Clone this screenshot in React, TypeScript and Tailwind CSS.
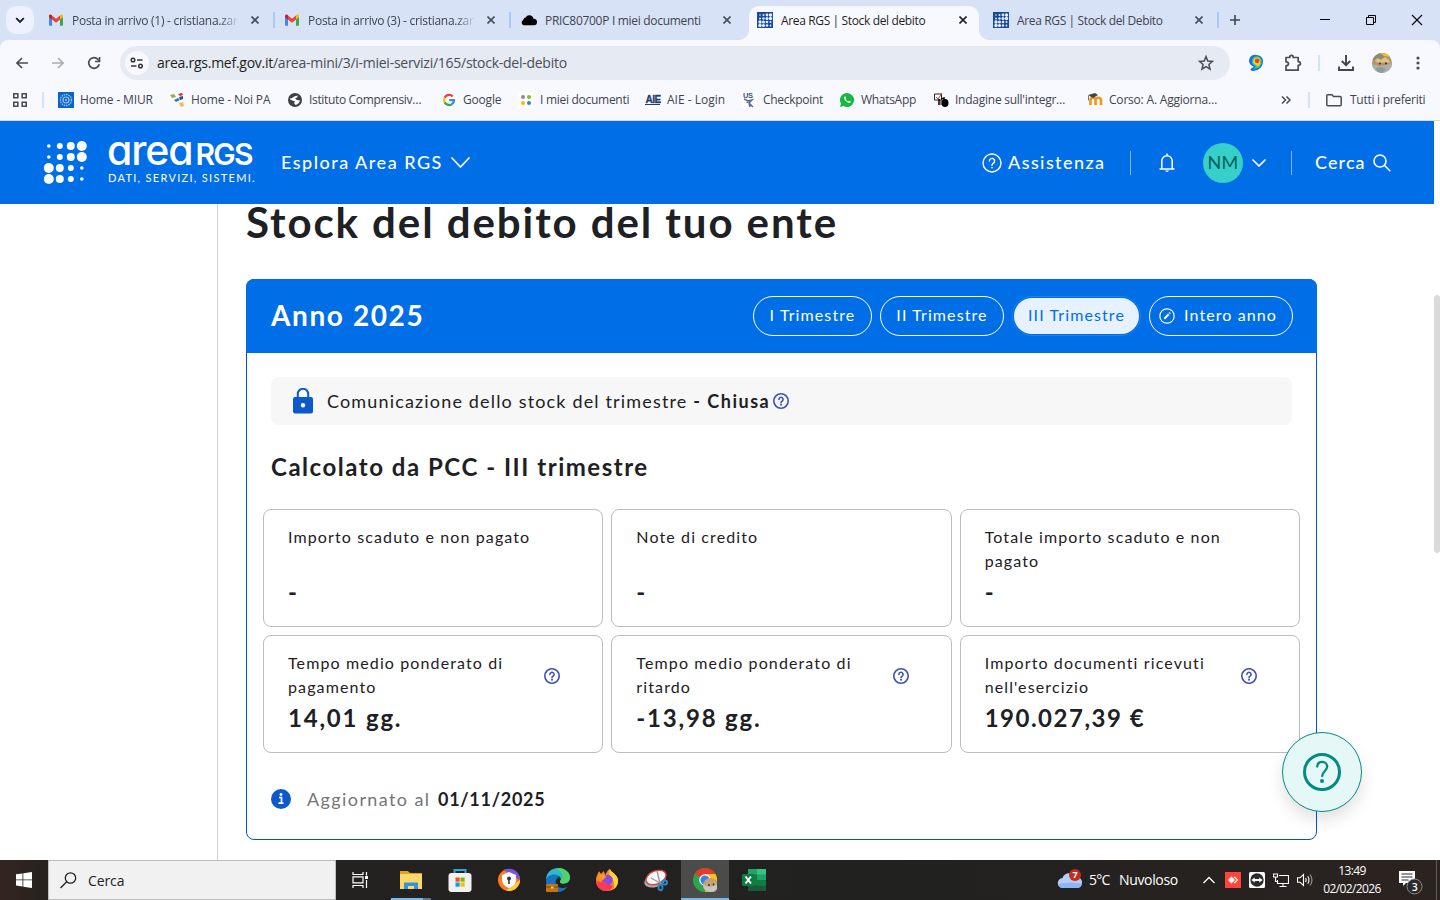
import type { ReactNode } from "react";
import { clsx } from "clsx";

const UI = "font-['Open_Sans','Noto_Sans',sans-serif]";
const PAGE = "font-['Lato','Open_Sans',sans-serif]";

/* ---------- small icons ---------- */

function Gmail() {
  return (
    <svg width="16" height="16" viewBox="1 0 16 16">
      <path d="M2 4v9a.8.8 0 0 0 .8.8H5V7z" fill="#4285f4" />
      <path d="M16 4v9a.8.8 0 0 1-.8.8H13V7z" fill="#34a853" />
      <path d="M5 3.600 9 6.800l4-3.200v4L9 10.800 5 7.600z" fill="#ea4335" />
      <path d="M2 4c0-1.600 1.700-2 3-.8v4.400L2 5.200z" fill="#c5221f" />
      <path d="M16 4c0-1.600-1.700-2-3-.8v4.400l3-2.400z" fill="#fbbc04" />
    </svg>
  );
}

function Cloud() {
  return (
    <svg width="16" height="16" viewBox="0 0 16 16">
      <path d="M2.500 13.200a2.800 2.800 0 0 1-.2-5.200A3 3 0 0 1 4.600 5.500a4.200 4.200 0 0 1 7.900 1.300A3.200 3.200 0 0 1 16 10.500a2.700 2.700 0 0 1-2.500 2.700z" fill="#000" />
    </svg>
  );
}

function RgsFavicon() {
  const sizes = [
    [0.8, 1, 1.4, 1.7],
    [1, 1.2, 1.5, 1.7],
    [1.7, 1.5, 1.3, 1],
    [1.7, 1.6, 1.2, 0.9],
  ];
  return (
    <svg width="16" height="16" viewBox="0 0 16 16">
      <rect width="16" height="16" fill="#164a9c" />
      {sizes.map((row, y) => row.map((r, x) => <circle key={`${x}-${y}`} cx={3 + x * 3.5} cy={3 + y * 3.5} r={r} fill="#e6efff" />))}
    </svg>
  );
}

function Cross({ dark }: { dark?: boolean }) {
  return (
    <svg width="8" height="8" viewBox="0 0 8 8" className="shrink-0">
      <path d="M.5.5l7 7m0-7l-7 7" stroke={dark ? "#1f1f1f" : "#474c58"} strokeWidth="1.600" />
    </svg>
  );
}

function Help({ size, width, color }: { size: number; width: number; color: string }) {
  return (
    <svg width={size} height={size} viewBox="0 0 20 20" fill="none" stroke={color} className="shrink-0">
      <circle cx="10" cy="10" r="9" strokeWidth={width} />
      <path d="M7.400 8a2.600 2.600 0 1 1 4 2.200c-.9.6-1.400 1-1.400 2" strokeWidth={width} strokeLinecap="round" />
      <circle cx="10" cy="14.600" r={width * 0.62} fill={color} stroke="none" />
    </svg>
  );
}

function Chevron({ w, h }: { w: number; h: number }) {
  return (
    <svg width={w} height={h} viewBox={`0 0 ${w} ${h}`} fill="none" className="shrink-0">
      <path d={`M1 1L${w / 2} ${h - 1}L${w - 1} 1`} stroke="#fff" strokeWidth="1.700" strokeLinecap="round" strokeLinejoin="round" />
    </svg>
  );
}

/* ---------- browser chrome ---------- */

type TabInfo = { title: string; icon: ReactNode; active?: boolean; divider?: boolean; spacing: string };

const tabs: TabInfo[] = [
  { title: "Posta in arrivo (1) - cristiana.zar", icon: <Gmail />, divider: true, spacing: "tracking-[-0.28px]" },
  { title: "Posta in arrivo (3) - cristiana.zar", icon: <Gmail />, divider: true, spacing: "tracking-[-0.28px]" },
  { title: "PRIC80700P I miei documenti", icon: <Cloud />, spacing: "tracking-[-0.3px]" },
  { title: "Area RGS | Stock del debito", icon: <RgsFavicon />, active: true, spacing: "tracking-[-0.36px]" },
  { title: "Area RGS | Stock del Debito", icon: <RgsFavicon />, divider: true, spacing: "tracking-[-0.36px]" },
];

function Tab({ title, icon, active, divider, spacing }: TabInfo) {
  const long = title.startsWith("Posta");
  return (
    <>
      <div className={clsx("relative mt-1.5 flex h-[34px] w-[230px] shrink-0 items-center pb-1.5", long ? "pl-[7px]" : "pl-2", active && "rounded-t-[10px] bg-[#f8f9fe]")}>
        {active && (
          <>
            <svg width="10" height="10" className="absolute bottom-0 -left-2.5"><path d="M10 0v10H0A10 10 0 0 0 10 0" fill="#f8f9fe" /></svg>
            <svg width="10" height="10" className="absolute -right-2.5 bottom-0"><path d="M0 0v10h10A10 10 0 0 1 0 0" fill="#f8f9fe" /></svg>
          </>
        )}
        {icon}
        <span
          className={clsx(
            "mt-0.5 ml-2 text-xs leading-5 whitespace-nowrap",
            spacing,
            long ? "w-[168px] [mask-image:linear-gradient(to_right,black_88%,transparent)]" : "w-[167px]",
            active ? "text-[#1f1f1f]" : "text-[#40444f]",
          )}
        >
          {title}
        </span>
        <span className="ml-[11px] flex"><Cross dark={active} /></span>
      </div>
      <span className={clsx("mx-[2px] mt-3 h-4 w-[2px] shrink-0", divider && "bg-[#a8c7fa]")} />
    </>
  );
}

function TabStrip() {
  return (
    <div className="flex h-10 bg-[#d7e2f7]">
      <button className="mt-1.5 mr-[7px] ml-1.5 flex size-7 items-center justify-center rounded-[10px] bg-[#edf2fe]">
        <svg width="10" height="7" viewBox="0 0 10 7" fill="none"><path d="M1.200 1.200 5 5l3.800-3.800" stroke="#1f1f1f" strokeWidth="1.900" /></svg>
      </button>
      {tabs.map((t) => <Tab key={t.title} {...t} />)}
      <div className="flex flex-1 items-center justify-between pr-[18px] pl-[9px]">
        <svg width="10" height="10"><path d="M5 0v10M0 5h10" stroke="#40444f" strokeWidth="1.600" /></svg>
        <div className="flex items-center gap-[35px]">
          <svg width="11" height="10"><path d="M1 4.500h10" stroke="#000" /></svg>
          <svg width="11" height="10" fill="none" stroke="#000"><path d="M1.500 2.500h7v7h-7zM3.500 2.500v-2h7v7h-2" /></svg>
          <svg width="12" height="12" className="-mr-px"><path d="M1 1l10 10M11 1L1 11" stroke="#000" strokeWidth="1.100" /></svg>
        </div>
      </div>
    </div>
  );
}

function AddressBar() {
  return (
    <div className="flex h-[46px] items-center rounded-t-[8px] bg-[#f8f9fe] pl-4">
      <svg width="12" height="12" fill="none" stroke="#474c58" strokeWidth="1.600"><path d="M12 6H1.200M6 1 1 6l5 5" /></svg>
      <svg width="12" height="12" fill="none" stroke="#a9acb6" strokeWidth="1.600" className="ml-6"><path d="M0 6h10.800M6 1l5 5-5 5" /></svg>
      <svg width="14" height="14" fill="none" stroke="#474c58" strokeWidth="1.700" className="ml-[23px]">
        <path d="M12.200 8.200A5.300 5.300 0 1 1 11 3.500L12.700 5.200" />
        <path d="M12.500 1v4.500H8" />
      </svg>
      <div className="ml-[19px] flex h-[34px] w-[1110px] items-center rounded-full bg-[#e6eaf2] pl-[5px]">
        <span className="flex size-6 items-center justify-center rounded-full bg-[#f8f9fe]">
          <svg width="14" height="12" fill="none" stroke="#30343c" strokeWidth="1.500">
            <circle cx="3" cy="3" r="1.800" /><path d="M7 3h5.500" />
            <circle cx="10.500" cy="9" r="1.800" /><path d="M1 9h5.500" />
          </svg>
        </span>
        <span className="ml-2 text-sm tracking-[-0.26px] whitespace-nowrap text-[#4a4e58]">
          <span className="text-[#1f1f1f]">area.rgs.mef.gov.it</span>/area-mini/3/i-miei-servizi/165/stock-del-debito
        </span>
        <svg width="16" height="16" viewBox="0 0 16 16" fill="none" stroke="#474c58" strokeWidth="1.500" className="mr-4 ml-auto">
          <path d="M8 1.600 9.800 6l4.700.4-3.600 3.100 1.100 4.600L8 11.600 4 14.100l1.100-4.600L1.500 6.400 6.200 6z" />
        </svg>
      </div>
      <svg width="16" height="18" viewBox="0 0 16 18" className="ml-[18px]">
        <path d="M8.500 1A6.300 6.300 0 0 1 15 7.500C15 13 10.500 17 4 17c-2-.5-1.500-3 .5-3.300.8-.1 1-.6 1-1.200A5.900 5.900 0 0 1 8.500 1" fill="#1672e8" />
        <path d="M9 2.300a5 5 0 0 1 4.700 5.200C13.700 12 10.500 14.700 6 15c0-1.500 1.500-1.500 1.600-2.900A5 5 0 0 1 9 2.300" fill="#29c7a5" />
        <path d="M9 3.500a3.800 3.800 0 0 1 3.600 4c0 3-1.600 4.700-4.100 5.300l.5-1.700a3.800 3.800 0 0 1 0-7.600" fill="#f7d21c" />
        <circle cx="9.200" cy="6.800" r="2.400" fill="#ef4423" />
      </svg>
      <svg width="18" height="18" viewBox="0 0 18 18" fill="none" stroke="#474c58" strokeWidth="1.700" className="ml-[20px]">
        <path d="M2 3.500h3.700c0-2.800 3.600-2.800 3.600 0h4.900v4.200c3 0 3 3.600 0 3.600v4.900H2v-4.300c3.300-.2 3.300-3.900 0-4.100z" strokeLinejoin="round" />
      </svg>
      <span className="ml-4 h-4 w-[2px] bg-[#d3e3fd]" />
      <svg width="16" height="16" fill="none" stroke="#40444f" strokeWidth="1.900" className="ml-[18px]">
        <path d="M8 0v10M3.800 6 8 10.200 12.200 6M1 11.500V15h14v-3.500" />
      </svg>
      <svg width="20" height="20" viewBox="0 0 20 20" className="ml-[18px]">
        <defs><clipPath id="face"><circle cx="10" cy="10" r="10" /></clipPath></defs>
        <g clipPath="url(#face)">
          <rect width="20" height="20" fill="#b8935f" />
          <path d="M0 0h20v5L14 3 9 6 0 7z" fill="#8f8a72" />
          <path d="M8 0h7l3 4-6-1z" fill="#f2c018" />
          <path d="M3 7l3-2 3 2 4-3 4 3 1 3-5-1-4 1-5-1z" fill="#dcc08d" />
          <path d="M0 11l7 2 6-1 7-2v10H0z" fill="#aab1b0" />
          <path d="M4 15l5-1 5 2-4 4H5z" fill="#8f9a9a" />
          <circle cx="8" cy="10.500" r="1" fill="#41301f" />
          <circle cx="14" cy="10.500" r="1" fill="#41301f" />
        </g>
      </svg>
      <svg width="4" height="14" className="ml-6" fill="#474c58"><circle cx="2" cy="2" r="1.600" /><circle cx="2" cy="7" r="1.600" /><circle cx="2" cy="12" r="1.600" /></svg>
    </div>
  );
}

const bookmarks: { label: string; box: string; spacing: string; icon: ReactNode }[] = [
  {
    label: "Home - MIUR", box: "w-[112px]", spacing: "tracking-[-0.13px]",
    icon: <><rect width="16" height="16" fill="#0b64cb" /><circle cx="8" cy="8" r="5.500" fill="none" stroke="#9cc9f8" strokeDasharray="1.500 .8" strokeWidth="1.300" /><circle cx="8" cy="8" r="3" fill="none" stroke="#9cc9f8" strokeWidth="1.200" /><circle cx="8" cy="8" r="1" fill="#9cc9f8" /></>,
  },
  {
    label: "Home - Noi PA", box: "w-[117px] -ml-px mr-px", spacing: "tracking-[-0.14px]",
    icon: <><path d="M1 3l4-1 2 3-4 1z" fill="#8fb73e" /><path d="M9 2l4-1 1 2-3 1z" fill="#d9302c" /><path d="M5 8l4-2 2 2-4 2z" fill="#2d7fc4" /><path d="M10 5l4-1v3l-3 1z" fill="#2a4d8f" /><path d="M10 11l4-1 1 4-3 1z" fill="#f0bc4a" /></>,
  },
  {
    label: "Istituto Comprensiv…", box: "w-[154px]", spacing: "tracking-[-0.34px]",
    icon: <><circle cx="8" cy="8" r="7" fill="#3c4043" /><path d="M2.500 6.500C5 7 6 4.500 9 4l2-.5-1 2-2 1 2 1.500 3 .5c-.5 2.500-2.500 4-4.500 4.500L7 11 8 9.500 4 8z" fill="#fff" /></>,
  },
  {
    label: "Google", box: "w-[77px]", spacing: "tracking-[-0.2px]",
    icon: <><circle cx="8" cy="8" r="8" fill="#fff" /><g fill="none" strokeWidth="2.300"><path d="M11.700 4.400A5 5 0 0 0 3.700 5.600" stroke="#ea4335" /><path d="M3.700 5.600a5 5 0 0 0 0 4.800" stroke="#fbbc04" /><path d="M3.700 10.400a5 5 0 0 0 7.600 1.400" stroke="#34a853" /><path d="M11.300 11.800A5 5 0 0 0 13 8.200H8.200" stroke="#4285f4" /></g></>,
  },
  {
    label: "I miei documenti", box: "w-[127px]", spacing: "tracking-[-0.28px]",
    icon: <><rect width="16" height="16" fill="#fdfcf8" /><circle cx="5" cy="5" r="2" fill="#8d8d8d" /><circle cx="11" cy="5" r="2" fill="#86bc25" /><circle cx="5" cy="11" r="2" fill="#fbba00" /><circle cx="11" cy="11" r="2" fill="#1e8dd2" /></>,
  },
  {
    label: "AIE - Login", box: "w-[96px]", spacing: "tracking-[0px]",
    icon: <><rect width="16" height="16" fill="#fff" /><text x=".5" y="11" fontSize="10" fontWeight="700" fontFamily="Liberation Sans" letterSpacing="-.5" fill="#243b73" stroke="#243b73" strokeWidth=".3">AIE</text><path d="M0 12.500h15" stroke="#243b73" /></>,
  },
  {
    label: "Checkpoint", box: "w-[98px]", spacing: "tracking-[-0.3px]",
    icon: <><rect width="16" height="16" fill="#fff" /><text x="2" y="6" fontSize="7.500" fontWeight="700" fontFamily="Liberation Sans" fill="#38508c">US</text><path d="M3 7l4 2 4-1-3 3 1 4M8 11l4 4M7 9l-1 2" fill="none" stroke="#5a6c98" strokeWidth="1.500" /></>,
  },
  {
    label: "WhatsApp", box: "w-[94px]", spacing: "tracking-[-0.3px]",
    icon: <><path d="M8 1a7 7 0 1 1-3.400 13.100L1 15l1-3.400A7 7 0 0 1 8 1" fill="#16b83f" /><path d="M5.700 4.500c-1 .6-1 2 .3 3.600S8.900 11 10.200 11s1.800-1 1.600-1.500l-1.600-.8-.9.9C8 9.200 6.900 8 6.600 7l.6-.9-.7-1.600z" fill="#fff" /></>,
  },
  {
    label: "Indagine sull'integr…", box: "w-[155px]", spacing: "tracking-[-0.25px]",
    icon: <><path d="M1.500 2h7v6h-7zM8 8v5" fill="#fff" stroke="#222" /><path d="M3 5l2 2 4-6" fill="none" stroke="#d43838" /><path d="M6 7v6M8 7l3-1v4" fill="none" stroke="#000" strokeWidth="1.500" /><ellipse cx="12" cy="11" rx="3.500" ry="4" fill="#000" /></>,
  },
  {
    label: "Corso: A. Aggiorna…", box: "w-[150px] -ml-px mr-px", spacing: "tracking-[-0.2px]",
    icon: <><path d="M3.500 13V8C3.500 5 8.500 5 8.500 8V13M8.500 8C8.500 5 14 5 14 8V13" fill="none" stroke="#f09a1c" strokeWidth="2.700" /><path d="M1 3l7-2 3 2-5 3z" fill="#444" /><path d="M1.500 3.500v5" stroke="#777" /></>,
  },
];

function BookmarksBar() {
  return (
    <div className="flex h-[35px] items-center border-b border-[#d5dbe6] bg-[#f8f9fe] pb-1.5 pl-[13px] text-xs text-[#40444f]">
      <svg width="14" height="14" fill="none" stroke="#474c58" strokeWidth="1.600">
        <path d="M.8.8h4v4h-4zM9.200.8h4v4h-4zM.8 9.200h4v4h-4zM9.200 9.200h4v4h-4z" />
      </svg>
      <span className="mr-[14px] ml-[15px] h-4 w-[2px] shrink-0 bg-[#d3e3fd]" />
      {bookmarks.map((b) => (
        <div key={b.label} className={clsx("flex shrink-0 items-center gap-1.5 whitespace-nowrap", b.box, b.spacing)}>
          <svg width="16" height="16" viewBox="0 0 16 16" className="shrink-0">{b.icon}</svg>
          {b.label}
        </div>
      ))}
      <svg width="10" height="8" fill="none" stroke="#474c58" strokeWidth="1.500" className="ml-[43px]"><path d="M1 .5 4.500 4 1 7.500M5.500.5 9 4 5.500 7.500" /></svg>
      <span className="mr-[16px] ml-[17px] h-4 w-[2px] bg-[#d3e3fd]" />
      <svg width="16" height="13" fill="none" stroke="#474c58" strokeWidth="1.500"><path d="M.8 1.800q0-1 1-1H6l1.500 1.700h6.700q1 0 1 1v7.200q0 1-1 1H1.800q-1 0-1-1z" /></svg>
      <span className="ml-2 tracking-[-0.27px] whitespace-nowrap">Tutti i preferiti</span>
    </div>
  );
}

/* ---------- site header ---------- */

const dots = [
  [1.8, 3, 4, 5],
  [1.8, 3, 4, 5],
  [5, 4, 3, 1.8],
  [5, 4, 3, 1.8],
];

function SiteHeader() {
  return (
    <header className="flex h-[83px] w-[1434px] shrink-0 items-center bg-[#006ee6] pl-[43px] text-white">
      <svg width="44" height="44" viewBox="0 0 44 44" fill="#fff" className="shrink-0">
        {dots.map((row, y) => row.map((r, x) => <circle key={`${x}-${y}`} cx={5.8 + x * 11} cy={5 + y * 11} r={r} />))}
      </svg>
      <div className="ml-5 flex h-[50px] w-[174px] shrink-0 flex-col">
        <div className="-mt-px flex h-7 items-baseline font-['Inter',sans-serif] leading-[27px] font-medium whitespace-nowrap">
          <span className="text-[41px] tracking-[-1.1px] [font-feature-settings:'cv11']">area</span>
          <span className="ml-[3px] text-[30px] font-semibold tracking-[-1.8px]">RGS</span>
        </div>
        <span className="mt-1.5 ml-px text-[11px] leading-[14px] tracking-[1.3px] whitespace-nowrap">DATI, SERVIZI, SISTEMI.</span>
      </div>
      <div className="flex w-[701px] items-center gap-2">
        <span className="pb-px text-lg font-medium tracking-[1.5px] whitespace-nowrap">Esplora Area RGS</span>
        <Chevron w={19} h={11} />
      </div>
      <Help size={20} width={1.4} color="#fff" />
      <span className="ml-1.5 w-[122px] pb-px text-lg font-medium tracking-[1.4px]">Assistenza</span>
      <span className="h-6 w-px bg-white/50" />
      <svg width="16" height="20" viewBox="0 0 16 20" fill="none" stroke="#fff" strokeWidth="1.500" className="ml-7">
        <path d="M.5 16h15M2.800 16V8a5.200 5.200 0 0 1 10.400 0v8M8 .5v2" />
        <path d="M6 17.600a2.200 2.200 0 0 0 4 0z" fill="#fff" stroke="none" />
      </svg>
      <span className="ml-7 flex size-10 items-center justify-center rounded-full bg-[#36cfc9] pb-px text-lg tracking-[0.2px] text-[#00615c]">NM</span>
      <span className="ml-[9px] flex"><Chevron w={14} h={8} /></span>
      <span className="ml-[25px] h-6 w-px bg-white/50" />
      <span className="ml-[23px] w-[58px] pb-px text-lg font-medium tracking-[1.1px]">Cerca</span>
      <svg width="18" height="18" viewBox="0 0 18 18" fill="none" stroke="#fff" strokeWidth="1.600"><circle cx="7" cy="7" r="6" /><path d="M11.300 11.300 17.300 17.300" /></svg>
    </header>
  );
}

/* ---------- page ---------- */

const quarters = [
  { label: "I Trimestre", box: "w-[119px]" },
  { label: "II Trimestre", box: "w-[124px]" },
  { label: "III Trimestre", box: "w-[129px]", active: true },
  { label: "Intero anno", box: "w-[144px] pr-1.5", edit: true },
];

const figures = [
  { label: "Importo scaduto e non pagato", value: "-" },
  { label: "Note di credito", value: "-" },
  { label: "Totale importo scaduto e non pagato", value: "-" },
  { label: "Tempo medio ponderato di pagamento", value: "14,01 gg.", help: true },
  { label: "Tempo medio ponderato di ritardo", value: "-13,98 gg.", help: true },
  { label: "Importo documenti ricevuti nell'esercizio", value: "190.027,39 €", help: true },
];

function DebtCard() {
  return (
    <section className="mt-[37px] h-[561px] w-[1071px] rounded-lg border border-[#0055cc] text-[#1d2024]">
      <div className="-mx-px -mt-px flex h-[74px] items-center rounded-t-lg bg-[#006ee6] pr-6 pl-[25px] text-white">
        <h2 className="mr-auto pb-0.5 text-[28px] font-bold tracking-[1.6px]">Anno 2025</h2>
        <div className="flex gap-2">
          {quarters.map((q) => (
            <button
              key={q.label}
              className={clsx(
                "flex h-10 items-center justify-center rounded-full border text-base tracking-[1.1px] whitespace-nowrap",
                q.box,
                q.active ? "border-[#1f80ea] p-px text-[#006ee6]" : "border-white",
              )}
            >
              {q.active ? (
                <span className="flex size-full items-center justify-center rounded-full bg-[#e6f2ff] pb-0.5">{q.label}</span>
              ) : (
                <>
                  {q.edit && (
                    <svg width="16" height="16" viewBox="0 0 16 16" fill="none" className="mr-[9px] shrink-0">
                      <circle cx="8" cy="8" r="7.200" stroke="#fff" strokeWidth="1.200" />
                      <path d="M5.300 10.800l4.400-4.600" stroke="#fff" strokeWidth="2" />
                      <path d="M10.300 5.500l.8-.8" stroke="#fff" strokeWidth="2" />
                    </svg>
                  )}
                  <span className="pb-0.5">{q.label}</span>
                </>
              )}
            </button>
          ))}
        </div>
      </div>

      <div className="mx-6 mt-6 flex h-12 items-center rounded-lg bg-[#f7f7f7] pl-[22px]">
        <svg width="20" height="26" viewBox="0 0 20 26">
          <path d="M4.800 10V6a5.200 5.200 0 0 1 10.400 0v4" fill="none" stroke="#0b59cd" strokeWidth="2" />
          <path d="M2 9h16a2 2 0 0 1 2 2v12.500a2 2 0 0 1-2 2H2a2 2 0 0 1-2-2V11a2 2 0 0 1 2-2m8 6a2.300 2.300 0 1 0 0 4.600A2.300 2.300 0 0 0 10 15" fill="#0b59cd" />
        </svg>
        <p className="ml-3.5 pb-px text-lg tracking-[1.16px] whitespace-nowrap">
          Comunicazione dello stock del trimestre <b className="tracking-[1.5px]">- Chiusa</b>
        </p>
        <span className="ml-[3px] flex"><Help size={16} width={2} color="#3f51b5" /></span>
      </div>

      <h3 className="mt-6 ml-6 text-2xl leading-9 font-bold tracking-[1.52px]">Calcolato da PCC - III trimestre</h3>

      <div className="mx-4 mt-6 grid grid-cols-3 gap-2">
        {figures.map((f) => (
          <div key={f.label} className="flex h-[118px] justify-between rounded-lg border border-[#bdbdbd] pt-[15px] pr-[42px] pl-6">
            <div>
              <p className="h-[49px] w-[250px] text-base leading-6 tracking-[1.12px]">{f.label}</p>
              <p className={clsx("text-2xl leading-9 font-bold whitespace-nowrap", f.value.endsWith("€") ? "tracking-[1.5px]" : "tracking-[1.8px]")}>{f.value}</p>
            </div>
            {f.help && <span className="mt-[17px] -ml-9"><Help size={16} width={2} color="#3f51b5" /></span>}
          </div>
        ))}
      </div>

      <div className="mt-[34px] ml-6 flex items-center text-lg leading-6">
        <svg width="20" height="20" viewBox="0 0 20 20">
          <circle cx="10" cy="10" r="10" fill="#0b59cd" />
          <path d="M8 8.500h2.500v5.500M7.500 14.200h5" stroke="#fff" strokeWidth="1.700" fill="none" />
          <circle cx="10" cy="5.500" r="1.400" fill="#fff" />
        </svg>
        <span className="ml-4 w-[131px] tracking-[1.4px] whitespace-nowrap text-[#757575]">Aggiornato al</span>
        <b className="tracking-[0.7px]">01/11/2025</b>
      </div>
    </section>
  );
}

function HelpButton() {
  return (
    <button className="absolute top-[528px] left-[1282px] flex size-20 items-center justify-center rounded-full border border-[#008c80] bg-[#e6f7f7] shadow-[0_8px_16px_rgba(0,0,0,0.12)]">
      <svg width="38" height="38" viewBox="0 0 38 38" fill="none" stroke="#008c80">
        <circle cx="19" cy="19" r="17.500" strokeWidth="3" />
        <path d="M14.200 13.500c.3-3 2.300-4.600 4.900-4.600 3.100 0 5.100 2 5.100 4.700 0 4.400-5 4.900-5 9.400" strokeWidth="2.300" strokeLinecap="round" />
        <circle cx="19" cy="28" r="2" fill="#008c80" stroke="none" />
      </svg>
    </button>
  );
}

/* ---------- taskbar ---------- */

function TaskApp({ children, active }: { children: ReactNode; active?: boolean }) {
  return (
    <span className={clsx("flex h-10 w-12 items-center justify-center", active && "border-b-2 border-[#76b9ed] bg-[#4b4b4a]")}>
      <svg width="24" height="24" viewBox="0 0 24 24" className={active ? "mt-0.5" : undefined}>{children}</svg>
    </span>
  );
}

function Taskbar() {
  return (
    <footer className={clsx("flex h-10 items-center bg-[linear-gradient(90deg,#33251e_0,#242220_60px,#212120_65%,#2b2320_100%)] text-white", UI)}>
      <span className="flex w-12 justify-center">
        <svg width="16" height="16" fill="#fff"><path d="M0 2.300 6.500 1.400v6.100H0zM7.300 1.300 16 0v7.500H7.300zM0 8.300h6.500v6.200L0 13.600zM7.300 8.300H16V16l-8.700-1.300z" /></svg>
      </span>
      <div className="flex h-10 w-72 items-center border border-[#bcbcbc] bg-[#f1f1f1] pl-[11px] text-[#222]">
        <svg width="17" height="17" fill="none" stroke="#222" strokeWidth="1.300"><circle cx="10.500" cy="6" r="5.200" /><path d="M6.700 9.800.5 16" /></svg>
        <span className="mt-px ml-[11px] text-sm tracking-[-0.1px]">Cerca</span>
      </div>
      <span className="flex w-12 justify-center">
        <svg width="17" height="16" fill="none" stroke="#fff" strokeWidth="1.200"><path d="M1 0v2.500h10V0M1 4.800h10v6H1zM1 16v-2.500h10V16M14.500 0v3.500M14.500 8v8" /><path d="M13 4h3v3h-3z" fill="#fff" stroke="none" /></svg>
      </span>
      <div className="ml-[3px] flex gap-px">
        <div className="relative">
          <TaskApp>
            <path d="M1 3h8l2 2h12v15H1z" fill="#e6a117" /><path d="M1 6h22v15H1z" fill="#ffd768" />
            <path d="M5 21v-6.500h14V21h-4v-3H9v3z" fill="#3394dc" />
          </TaskApp>
          <span className="absolute bottom-0 left-1 h-0.5 w-8 bg-[#76b9ed]" />
          <span className="absolute bottom-0 left-9 h-0.5 w-2 bg-[#557896]" />
        </div>
        <TaskApp>
          <path d="M6.500 6V2h11v4" fill="none" stroke="#27aae1" strokeWidth="2" /><rect x=".5" y="5" width="23" height="19" rx="3" fill="#f1f1f1" />
          <path d="M7.500 9.500h4.200v4.200H7.500z" fill="#f25022" /><path d="M12.500 9.500h4.200v4.200h-4.200z" fill="#7fba00" /><path d="M7.500 14.500h4.200v4.200H7.500z" fill="#00a4ef" /><path d="M12.500 14.500h4.200v4.200h-4.200z" fill="#ffb900" />
        </TaskApp>
        <TaskApp>
          <circle cx="12" cy="12" r="11" fill="#ff7a1a" /><path d="M7 2a11 11 0 0 1 16 10L16 8z" fill="#7454e8" /><path d="M23 12A11 11 0 0 1 9 22.500l8-6z" fill="#ffc93c" />
          <path d="M12 4l7 3v5c0 4-3 6.500-7 8-4-1.500-7-4-7-8V7z" fill="#fff" /><circle cx="12" cy="10.500" r="2" fill="#2b3553" /><path d="M11.200 11h1.600v5h-1.600z" fill="#2b3553" />
        </TaskApp>
        <TaskApp>
          <path d="M0 12C0 5 5 0 12 0s12 4.500 12 9.500-4 6-7 6-3.500-1.500-2.500-3c1-2-.5-5-4.500-5C5 7.500 1 9 0 12" fill="#2fb8d0" />
          <path d="M14 0c6 1 10 5 10 9.500s-4 6-7 6-3.500-1.500-2.500-3C18 9 17 4 10 1z" fill="#4fd36a" />
          <path d="M0 13C0 9 4 6.500 8 6.500c3 0 5 1.500 5 3-3 1-4 3.500-3 6.500 1.500 4 6 5 11 3-2 3.500-5.500 5-9 5C5 24 0 20 0 13" fill="#1573c2" />
          <rect y="16" width="12" height="8" rx="1" fill="#c47412" /><path d="M0 19h12" stroke="#7d460b" /><path d="M5 18.500h2.500v2H5z" fill="#ffd45a" />
        </TaskApp>
        <TaskApp>
          <path d="M12 23C5.500 23 1 18.500 1 12.500 1 8 3 6 4 3l2 3 3-3 1 4c2-2 2-5 5-6 0 3 8 5 8 12 0 6-4.500 10-11 10" fill="#ff8a24" />
          <path d="M15 1c0 3 8 5 8 12 0 3-1.500 6-4 8 1-5 0-9-3-12-2-2-2-5-1-8" fill="#ffd43a" />
          <circle cx="12.500" cy="12" r="5.300" fill="#874cdf" /><path d="M1 12c2 3 5 1 8 2 2 1 5 4 9 3-1 4-4 6-7 6-6 0-10-5-10-11" fill="#fa3b55" />
          <path d="M5 7c3-1 5 0 6 2l-3 3-4-2z" fill="#ff9b27" />
        </TaskApp>
        <TaskApp>
          <ellipse cx="11" cy="12.500" rx="11" ry="6.500" fill="#a9a9ae" transform="rotate(-18 11 12.500)" /><ellipse cx="12" cy="9.500" rx="10.500" ry="6.500" fill="#f8f8f8" stroke="#dc403c" strokeWidth="1.300" transform="rotate(-22 12 9.500)" />
          <path d="M13 3l3 12M7 10l9 5" stroke="#999" strokeWidth="1.400" /><g fill="none" stroke="#2787cd" strokeWidth="1.900"><ellipse cx="20.500" cy="14.500" rx="2.600" ry="2" /><ellipse cx="16.500" cy="19.500" rx="2" ry="2.800" /></g>
        </TaskApp>
        <TaskApp active>
          <circle cx="12" cy="12" r="12" fill="#2da44e" /><path d="M12 12 1.600 6A12 12 0 0 1 22.400 6z" fill="#e33b2e" /><path d="M12 6h10.400A12 12 0 0 1 12 24z" fill="#fbc116" />
          <circle cx="12" cy="12" r="5.800" fill="#fff" /><circle cx="12" cy="12" r="4.600" fill="#3b7fee" />
          <circle cx="17.500" cy="17.500" r="7.500" fill="#c5a173" /><path d="M10 17l7 2 8-3a7.500 7.500 0 0 1-15 1" fill="#c3c7c6" /><circle cx="16" cy="17" r=".9" fill="#3a2c20" /><circle cx="20.500" cy="16.500" r=".9" fill="#3a2c20" />
        </TaskApp>
        <TaskApp>
          <path d="M6 1h18v22H6z" fill="#21a366" /><path d="M15 1h9v5.500h-9z" fill="#33c481" /><path d="M6 6.500h9V12H6zM6 12h9v11H6z" fill="#107c41" /><path d="M15 12h9v5.500h-9z" fill="#107c41" /><path d="M6 17.500h18V23H6z" fill="#185c37" />
          <rect y="6" width="12.500" height="12" rx="1" fill="#107c41" /><path d="M3.500 8.500l5.500 7M9 8.500l-5.500 7" stroke="#fff" strokeWidth="2" />
        </TaskApp>
      </div>
      <svg width="26" height="24" viewBox="0 0 26 24" className="ml-[279px]">
        <path d="M6 20a5 5 0 0 1-.5-10A7 7 0 0 1 18 8.500c4 0 7 2.500 7 5.500 0 3.500-2 6-5 6z" fill="#b4cffa" />
        <path d="M1 16c1 3 3 4 5 4h14c3 0 5-2 5-5-5 1-9-1-12-.5-5 1.500-8 0-12 1.500" fill="#8fb5f4" />
        <circle cx="18" cy="7" r="6" fill="#c42b1c" /><text x="15.500" y="10.300" fontSize="9" fontWeight="700" fontFamily="Open Sans" fill="#fff">7</text>
      </svg>
      <span className="ml-1.5 w-[30px] text-sm tracking-[-0.7px]">5°C</span>
      <span className="w-[84px] text-sm tracking-[-0.35px]">Nuvoloso</span>
      <svg width="12" height="8" fill="none" stroke="#fff" strokeWidth="1.300"><path d="M.5 7 6 1.500 11.500 7" /></svg>
      <svg width="16" height="16" className="ml-2.5"><rect width="16" height="16" fill="#ff4438" /><path d="M6.500 4.500 10 8l-3.500 3.500L3 8z" fill="#fff" /><path d="M9.300 4.800 12.500 8l-3.200 3.200" stroke="#fff" fill="none" strokeWidth="1.200" /></svg>
      <svg width="16" height="16" className="ml-2"><rect width="16" height="16" rx="1.500" fill="#fff" /><circle cx="8" cy="8" r="6.700" fill="#2b2b2b" /><path d="M2.300 8l3.500-2.600v1.700h4.400V5.400L13.700 8l-3.500 2.600V8.900H5.800v1.700z" fill="#fff" /></svg>
      <svg width="16" height="15" fill="none" stroke="#fff" strokeWidth="1.100" className="ml-2"><path d="M6 2.500h9.500v8H4.500V7M10 10.500v3M6.500 13.500h7M.5 1h4v3h-4zM2.500 4v4.500h2" /></svg>
      <svg width="17" height="14" fill="none" stroke="#fff" strokeWidth="1.100" className="ml-2"><path d="M.5 4.800H3L6.500 1.500v11L3 9.200H.5zM8.500 5q1.300 2 0 4M10.700 3.300q2.600 3.700 0 7.400" /><path d="M13 1.500q4 5.500 0 11" stroke="#999" /></svg>
      <div className="ml-[7px] w-[62px] text-center text-xs leading-[18px] tracking-[-0.6px] whitespace-nowrap">
        <div>13:49</div>
        <div>02/02/2026</div>
      </div>
      <svg width="26" height="26" viewBox="0 0 26 26" className="mt-1.5 ml-[15px]">
        <path d="M1 1h16v12H8l-3 3v-3H1z" fill="#fff" /><path d="M3.500 4h11M3.500 7h11M3.500 10h7" stroke="#2b2b2b" />
        <circle cx="16.500" cy="16.500" r="7.500" fill="#2c2b2b" stroke="#8b8b8b" /><text x="13.700" y="20.500" fontSize="10.500" fontWeight="600" fontFamily="Open Sans" fill="#fff">3</text>
      </svg>
      <span className="mr-[3px] ml-auto h-10 w-px bg-[#625c59]" />
    </footer>
  );
}

export default function App() {
  return (
    <div className="flex h-[900px] w-[1440px] flex-col overflow-hidden bg-white">
      <div className={clsx("bg-[#d7e2f7]", UI)}>
        <TabStrip />
        <AddressBar />
        <BookmarksBar />
      </div>
      <div className={clsx("flex h-[739px]", PAGE)}>
        <div className="flex w-[1434px] flex-col">
          <SiteHeader />
          <main className="relative flex flex-1 overflow-hidden">
            <aside className="w-[218px] shrink-0 border-r border-[#d0d0d0]" />
            <div className="pl-7">
              <h1 className="h-[38px] text-[42px] leading-[37px] font-bold tracking-[1.92px] whitespace-nowrap text-[#1d2024]">Stock del debito del tuo ente</h1>
              <DebtCard />
            </div>
            <HelpButton />
          </main>
        </div>
        <div className="w-1.5 pt-[174px]">
          <div className="h-[258px] rounded-full bg-[#dadada]" />
        </div>
      </div>
      <Taskbar />
    </div>
  );
}
